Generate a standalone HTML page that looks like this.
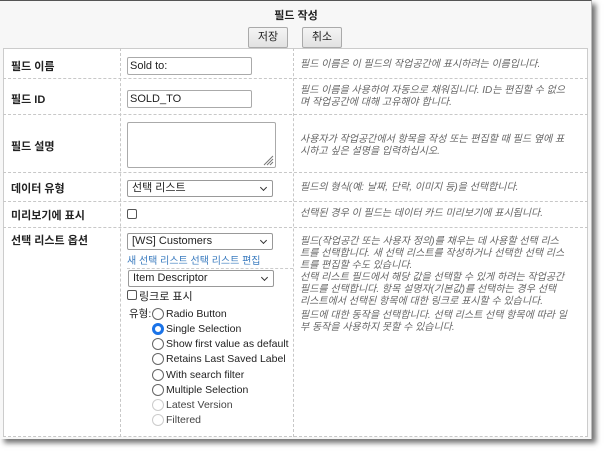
<!DOCTYPE html>
<html><head><meta charset="utf-8"><style>
*{box-sizing:border-box;margin:0;padding:0}
body{width:606px;height:452px;background:#fff;position:relative;overflow:hidden;font-family:"Liberation Sans","Noto Sans CJK KR",sans-serif;font-size:11px;color:#222}
.win{position:absolute;left:0;top:0;width:592px;height:439px;background:#f7f7f7;border-top:1px solid #555;border-right:1px solid #bbb;box-shadow:4px 4px 5px rgba(0,0,0,.55)}
.title{position:absolute;left:0;width:592px;top:6px;text-align:center;font-weight:bold;font-size:11px}
.btn{position:absolute;top:26px;height:21px;width:40px;border:1px solid #aaa;border-radius:2px;background:linear-gradient(#f4f4f4,#e2e2e2);text-align:center;line-height:19px;font-size:11px}
.panel{position:absolute;left:3px;top:48px;width:585px;height:389px;background:#fff;border:1px solid #ccc;border-bottom:none}
.hl{position:absolute;left:3px;width:585px;border-top:1px dashed #c8c8c8}
.vl{position:absolute;top:48px;height:389px;border-left:1px dashed #c8c8c8}
.lab{position:absolute;left:11px;font-weight:bold;font-size:11px}
.inp{position:absolute;left:127px;height:18px;border:1px solid #aaa;border-radius:2px;background:#fff;padding-left:2px;font-size:11px;line-height:16px}
.sel{position:absolute;left:127px;height:17px;width:146px;border:1px solid #999;border-radius:2px;background:#fff;padding-left:4px;font-size:11px;line-height:15px}
.sel:after{content:"";position:absolute;right:6px;top:4px;width:4px;height:4px;border-right:1.3px solid #333;border-bottom:1.3px solid #333;transform:rotate(45deg)}
.desc{position:absolute;left:300px;width:268px;font-style:italic;color:#666;font-size:10px;line-height:12px}
.desc p{margin-bottom:2px}
.cb{position:absolute;width:10px;height:10px;border:1px solid #555;border-radius:2px;background:#fff}
.r{position:absolute;left:152px;font-size:10.5px;height:14px;line-height:14px;padding-left:14px}
.r:before{content:"";position:absolute;left:0;top:1px;width:10px;height:10px;border:1px solid #666;border-radius:50%;background:#fff}
.r.on:before{border:3px solid #1a73e8;width:6px;height:6px}
.r.dis{color:#444}.r.dis:before{border-color:#ccc}
</style></head><body>
<div class="win">
<div class="title">필드 작성</div>
<div class="btn" style="left:248px">저장</div>
<div class="btn" style="left:302px">취소</div>
</div>
<div class="panel"></div>
<div class="vl" style="left:120px"></div>
<div class="vl" style="left:293px"></div>
<div class="hl" style="top:78px"></div>
<div class="hl" style="top:114px"></div>
<div class="hl" style="top:172px"></div>
<div class="hl" style="top:201px"></div>
<div class="hl" style="top:227px"></div>
<div class="hl" style="top:436px"></div>

<div class="lab" style="top:58px">필드 이름</div>
<div class="inp" style="top:57px;width:125px">Sold to:</div>
<div class="desc" style="top:59px">필드 이름은 이 필드의 작업공간에 표시하려는 이름입니다.</div>

<div class="lab" style="top:91px">필드 ID</div>
<div class="inp" style="top:90px;width:125px">SOLD_TO</div>
<div class="desc" style="top:85px">필드 이름을 사용하여 자동으로 채워집니다. ID는 편집할 수 없으며 작업공간에 대해 고유해야 합니다.</div>

<div class="lab" style="top:138px">필드 설명</div>
<div class="inp" style="top:122px;width:149px;height:46px"><svg style="position:absolute;right:1px;bottom:1px" width="12" height="12"><path d="M11 2L2 11M11 5L5 11M11 8L8 11" stroke="#777" stroke-width="1"/></svg></div>
<div class="desc" style="top:134px">사용자가 작업공간에서 항목을 작성 또는 편집할 때 필드 옆에 표시하고 싶은 설명을 입력하십시오.</div>

<div class="lab" style="top:180px">데이터 유형</div>
<div class="sel" style="top:180px">선택 리스트</div>
<div class="desc" style="top:182px">필드의 형식(예: 날짜, 단락, 이미지 등)을 선택합니다.</div>

<div class="lab" style="top:207px">미리보기에 표시</div>
<div class="cb" style="left:127px;top:209px"></div>
<div class="desc" style="top:208px">선택된 경우 이 필드는 데이터 카드 미리보기에 표시됩니다.</div>

<div class="lab" style="top:232px">선택 리스트 옵션</div>
<div class="sel" style="top:233px">[WS] Customers</div>
<div style="position:absolute;left:127px;top:252px;color:#3a7bbf;font-size:10px">새 선택 리스트 선택 리스트 편집</div>
<div style="position:absolute;left:127px;top:268px;width:166px;border-top:1px dashed #ccc"></div>
<div class="sel" style="top:270px;left:128px">Item Descriptor</div>
<div class="cb" style="left:127px;top:290px"></div>
<div style="position:absolute;left:139px;top:288px;font-size:11px">링크로 표시</div>
<div style="position:absolute;left:129px;top:306px;font-size:10.5px">유형:</div>
<div class="r" style="top:307px">Radio Button</div>
<div class="r on" style="top:322px">Single Selection</div>
<div class="r" style="top:337px">Show first value as default</div>
<div class="r" style="top:352px">Retains Last Saved Label</div>
<div class="r" style="top:368px">With search filter</div>
<div class="r" style="top:383px">Multiple Selection</div>
<div class="r dis" style="top:398px">Latest Version</div>
<div class="r dis" style="top:413px">Filtered</div>
<div class="desc" style="top:236px"><p style="margin:0">필드(작업공간 또는 사용자 정의)를 채우는 데 사용할 선택 리스트를 선택합니다. 새 선택 리스트를 작성하거나 선택한 선택 리스트를 편집할 수도 있습니다.</p><p>선택 리스트 필드에서 해당 값을 선택할 수 있게 하려는 작업공간 필드를 선택합니다. 항목 설명자(기본값)를 선택하는 경우 선택 리스트에서 선택된 항목에 대한 링크로 표시할 수 있습니다.</p><p>필드에 대한 동작을 선택합니다. 선택 리스트 선택 항목에 따라 일부 동작을 사용하지 못할 수 있습니다.</p></div>
</body></html>
